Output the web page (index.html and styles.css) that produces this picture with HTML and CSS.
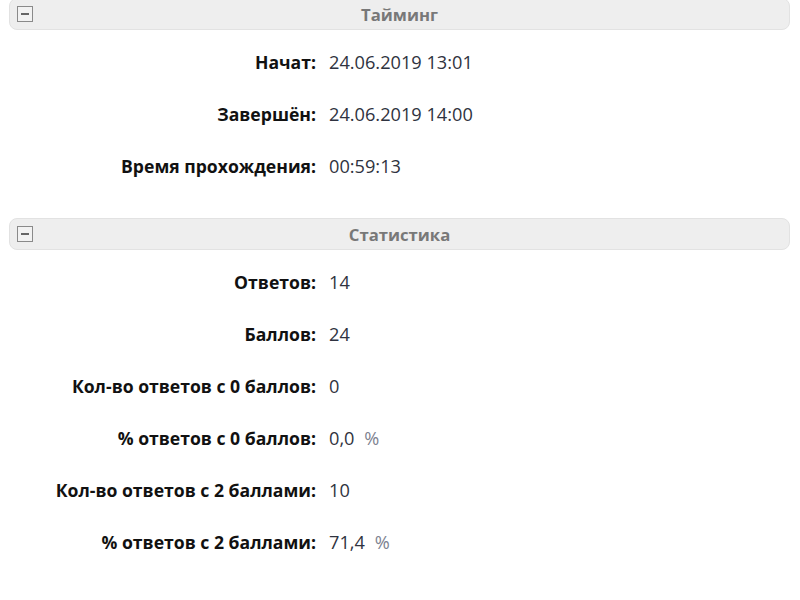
FILE: index.html
```html
<!DOCTYPE html>
<html lang="ru">
<head>
  <meta charset="UTF-8">
  <title>Результат</title>
  <link rel="stylesheet" href="styles.css">
</head>
<body>
  <!-- Тайминг -->
  <div class="panel first">
    <div class="panel-head">
      <span class="toggle"></span>
      <span class="panel-title">Тайминг</span>
    </div>
    <div class="rows">
      <div class="row"><div class="label">Начат:</div><div class="value">24.06.2019 13:01</div></div>
      <div class="row"><div class="label">Завершён:</div><div class="value">24.06.2019 14:00</div></div>
      <div class="row"><div class="label">Время прохождения:</div><div class="value">00:59:13</div></div>
    </div>
  </div>

  <!-- Статистика -->
  <div class="panel">
    <div class="panel-head">
      <span class="toggle"></span>
      <span class="panel-title">Статистика</span>
    </div>
    <div class="rows">
      <div class="row"><div class="label">Ответов:</div><div class="value">14</div></div>
      <div class="row"><div class="label">Баллов:</div><div class="value">24</div></div>
      <div class="row"><div class="label">Кол-во ответов с 0 баллов:</div><div class="value">0</div></div>
      <div class="row"><div class="label">% ответов с 0 баллов:</div><div class="value">0,0 <span class="unit">%</span></div></div>
      <div class="row"><div class="label">Кол-во ответов с 2 баллами:</div><div class="value">10</div></div>
      <div class="row"><div class="label">% ответов с 2 баллами:</div><div class="value">71,4 <span class="unit">%</span></div></div>
    </div>
  </div>
</body>
</html>
```

FILE: styles.css
```css
body {
  font-family: "Open Sans", sans-serif;
  font-size: 17px;
  margin: 0;
  padding: 0 10px 0 9px;
  background-color: #ffffff;
  color: #333333;
}

/* Panels */
.panel {
  margin-bottom: 26px;
}

.panel.first {
  margin-top: -2px;
}

.panel-head {
  display: flex;
  align-items: center;
  justify-content: center;
  position: relative;
  height: 30px;
  background-color: #eeeeee;
  border: 1px solid #e2e2e2;
  border-radius: 8px;
}

.panel-head .toggle {
  position: absolute;
  left: 7px;
  top: 7px;
  width: 14px;
  height: 14px;
  border: 1px solid #8a8a8a;
  background-color: #f2f2f2;
}

.panel-head .toggle::after {
  content: "";
  position: absolute;
  left: 3px;
  top: 6px;
  width: 8px;
  height: 2px;
  background-color: #666666;
}

.panel-title {
  font-size: 16.7px;
  font-weight: 700;
  color: #787878;
}

/* Rows */
.rows {
  padding-top: 6px;
}

.row {
  display: flex;
  align-items: center;
  height: 52px;
}

.row .label {
  width: 307px;
  text-align: right;
  font-size: 17.6px;
  font-weight: 700;
  color: #111111;
}

.row .value {
  padding-left: 13px;
  font-size: 18.2px;
  color: #2f3340;
}

.row .unit {
  color: #7d8290;
  margin-left: 5px;
}
```
